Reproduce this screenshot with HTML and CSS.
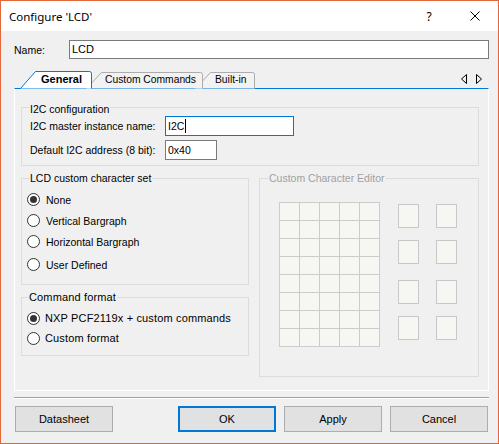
FILE: index.html
```html
<!DOCTYPE html>
<html>
<head>
<meta charset="utf-8">
<link rel="stylesheet" href="styles.css">
</head>
<body>
<div class="win">
  <div class="titlebar">
    <div class="title">Configure 'LCD'</div>
    <div class="cap help">?</div>
    <div class="cap close">
      <svg width="10" height="10" viewBox="0 0 10 10"><path d="M0.5 0.5 L9.5 9.5 M9.5 0.5 L0.5 9.5" stroke="#000" stroke-width="1" fill="none"/></svg>
    </div>
  </div>
  <div class="body">
    <div class="name-row">
      <div class="name-label">Name:</div>
      <div class="field name-field">LCD</div>
    </div>
    <div class="tabstrip">
      <svg class="tabshapes" width="475" height="19" viewBox="0 0 475 19">
        <path d="M181.5 19.5 L196.5 3.5 H238.5 Q240.5 3.5 240.5 5.5 V19.5" fill="#f2f2f2" stroke="#acacac"/>
        <path d="M72.5 19.5 L87.5 3.5 H186.5 Q188.5 3.5 188.5 5.5 V19.5" fill="#f2f2f2" stroke="#acacac"/>
        <path d="M6.5 19.5 L21.5 2.5 H75.5 Q77.5 2.5 77.5 4.5 V19.5" fill="#ffffff" stroke="#0078d7"/>
      </svg>
      <div class="tab tab-general">General</div>
      <div class="tab tab-cc">Custom Commands</div>
      <div class="tab tab-bi">Built-in</div>
      <div class="tab-arrows">
        <svg width="21" height="10" viewBox="0 0 21 10"><path d="M5.5 0.5 L0.5 5 L5.5 9.5 Z" fill="none" stroke="#000"/><path d="M15.5 0.5 L20.5 5 L15.5 9.5 Z" fill="none" stroke="#000"/></svg>
      </div>
    </div>
    <div class="panel">
      <div class="group i2c">
        <div class="gtitle">I2C configuration</div>
        <div class="frow">
          <div class="flabel">I2C master instance name:</div>
          <div class="field focus w128">I2C<span class="caret"></span></div>
        </div>
        <div class="frow second">
          <div class="flabel">Default I2C address (8 bit):</div>
          <div class="field w52">0x40</div>
        </div>
      </div>
      <div class="lower">
        <div class="leftcol">
          <div class="group charset">
            <div class="gtitle">LCD custom character set</div>
            <div class="radios">
              <div class="rrow"><span class="radio checked"></span><span>None</span></div>
              <div class="rrow"><span class="radio"></span><span>Vertical Bargraph</span></div>
              <div class="rrow"><span class="radio"></span><span>Horizontal Bargraph</span></div>
              <div class="rrow last"><span class="radio"></span><span>User Defined</span></div>
            </div>
          </div>
          <div class="group cmd">
            <div class="gtitle">Command format</div>
            <div class="radios">
              <div class="rrow"><span class="radio checked"></span><span>NXP PCF2119x + custom commands</span></div>
              <div class="rrow"><span class="radio"></span><span>Custom format</span></div>
            </div>
          </div>
        </div>
        <div class="group editor">
          <div class="gtitle disabled">Custom Character Editor</div>
          <div class="editor-body">
            <div class="pixgrid">
              <i></i><i></i><i></i><i></i><i></i>
              <i></i><i></i><i></i><i></i><i></i>
              <i></i><i></i><i></i><i></i><i></i>
              <i></i><i></i><i></i><i></i><i></i>
              <i></i><i></i><i></i><i></i><i></i>
              <i></i><i></i><i></i><i></i><i></i>
              <i></i><i></i><i></i><i></i><i></i>
              <i></i><i></i><i></i><i></i><i></i>
            </div>
            <div class="slots">
              <div class="slotrow"><b></b><b></b></div>
              <div class="slotrow"><b></b><b></b></div>
              <div class="slotrow wide"><b></b><b></b></div>
              <div class="slotrow"><b></b><b></b></div>
            </div>
          </div>
        </div>
      </div>
    </div>
    <div class="sep"></div>
    <div class="buttons">
      <div class="btn">Datasheet</div>
      <div class="spacer"></div>
      <div class="btn default">OK</div>
      <div class="btn">Apply</div>
      <div class="btn">Cancel</div>
    </div>
  </div>
</div>
</body>
</html>
```
FILE: styles.css
```css
* { box-sizing: border-box; }
html, body { margin: 0; padding: 0; background: #f0f0f0; }
body {
  font-family: "Liberation Sans", Arial, sans-serif;
  font-size: 10.5px;
  color: #000;
}
.win {
  width: 499px;
  height: 444px;
  border: 1px solid #e2683c;
  background: #f0f0f0;
  display: flex;
  flex-direction: column;
}
.titlebar {
  height: 30px;
  background: #ffffff;
  display: flex;
  align-items: center;
  flex: none;
}
.title {
  font-family: "Noto Sans", "Liberation Sans", sans-serif;
  font-size: 11.5px;
  padding-left: 8px;
  flex: 1;
}
.cap {
  width: 46px;
  height: 30px;
  display: flex;
  align-items: center;
  justify-content: center;
}
.help {
  font-family: "Noto Sans", "Liberation Sans", sans-serif;
  font-size: 12px;
}
.close svg { display: block; }

.body {
  padding: 0 9px 0 13px;
  display: flex;
  flex-direction: column;
}
.name-row {
  margin-top: 9px;
  height: 19px;
  display: flex;
  align-items: center;
}
.name-label { width: 55px; padding-left: 0; }
.field {
  height: 20px;
  background: #fff;
  border: 1px solid #7a7a7a;
  padding-left: 2px;
  display: flex;
  align-items: center;
  line-height: 13px;
}
.name-field { flex: 1; height: 19px; font-size: 11px; }
.field.focus { border-color: #0078d7; }
.w128 { width: 129px; }
.w52 { width: 52px; }
.caret {
  display: inline-block;
  width: 1px;
  height: 14px;
  background: #000;
  margin-left: 1px;
}

.tabstrip {
  margin-top: 10px;
  height: 19px;
  position: relative;
  display: flex;
  align-items: center;
}
.tabshapes { position: absolute; left: 0; top: 0; overflow: visible; }
.tab {
  position: relative;
  line-height: 19px;
  padding-top: 2px;
  font-size: 11px;
}
.tab-general { margin-left: 27px; width: 64px; font-weight: bold; }
.tab-cc { width: 110px; font-size: 10.3px; }
.tab-bi { font-size: 10.3px; }
.tab-arrows {
  position: relative;
  margin-left: auto;
  margin-right: 7px;
  display: flex;
  padding-top: 1px;
}
.tab-arrows svg { display: block; }

.panel {
  height: 303px;
  border-top: 1px solid #0078d7;
  border-left: 1px solid #fff;
  border-right: 1px solid #fff;
  border-bottom: 1px solid #fff;
  padding: 0 9px 0 6px;
}
.group {
  border: 1px solid #dcdcdc;
}
.gtitle {
  margin-top: -7px;
  margin-left: 7px;
  padding: 0 1px;
  line-height: 13px;
  background: #f0f0f0;
  width: fit-content;
}
.gtitle.disabled { color: #a0a0a0; }
.i2c {
  margin-top: 18px;
  padding: 2px 0 5px 8px;
}
.i2c .gtitle { margin-left: -1px; }
.frow { display: flex; align-items: center; }
.frow.second { margin-top: 4px; }
.flabel { width: 135px; }

.lower {
  margin-top: 12px;
  display: flex;
  gap: 10px;
}
.leftcol { width: 228px; display: flex; flex-direction: column; }
.charset { padding: 0 0 9px 5px; }
.charset .gtitle { margin-left: 2px; }
.charset .radios { padding-top: 4px; }
.cmd { margin-top: 12px; padding: 0 0 7px 5px; font-size: 11px; letter-spacing: 0.15px; }
.cmd .gtitle { margin-left: 1px; }
.cmd .radios { padding-top: 4px; }
.cmd .rrow { height: 20px; gap: 5px; }
.rrow {
  height: 21px;
  display: flex;
  align-items: center;
  gap: 6px;
}
.rrow.last { margin-top: 2px; }
.radio {
  width: 13px;
  height: 13px;
  border-radius: 50%;
  border: 1px solid #333;
  background: #fff;
  display: flex;
  align-items: center;
  justify-content: center;
  flex: none;
}
.radio.checked::after {
  content: "";
  width: 7px;
  height: 7px;
  border-radius: 50%;
  background: #333;
}

.editor {
  width: 220px;
  height: 199px;
  padding: 0 0 0 19px;
}
.editor .gtitle { margin-left: -11px; }
.editor-body {
  margin-top: 17px;
  display: flex;
  gap: 18px;
}
.pixgrid {
  display: grid;
  grid-template-columns: repeat(5, 19px);
  grid-template-rows: repeat(8, 17px);
  gap: 1px;
  padding: 1px;
  background: #cccccc;
  width: 101px;
}
.pixgrid i { background: #f6f6f3; display: block; }
.slots { margin-top: 2px; display: flex; flex-direction: column; gap: 12px; }
.slotrow { display: flex; gap: 17px; }
.slotrow.wide { margin-top: 4px; }
.slotrow b {
  display: block;
  width: 21px;
  height: 24px;
  border: 1px solid #c8c8c8;
  background: #f6f6f3;
}

.sep {
  margin-top: 6px;
  height: 2px;
  border-top: 1px solid #a0a0a0;
  border-bottom: 1px solid #fff;
}
.buttons {
  margin-top: 7px;
  display: flex;
  gap: 8px;
  padding: 0 1px;
}
.spacer { flex: 1; }
.btn {
  width: 98px;
  height: 26px;
  background: #e1e1e1;
  border: 1px solid #adadad;
  display: flex;
  align-items: center;
  justify-content: center;
  font-size: 11px;
}
.btn.default { border: 2px solid #0078d7; }
```
